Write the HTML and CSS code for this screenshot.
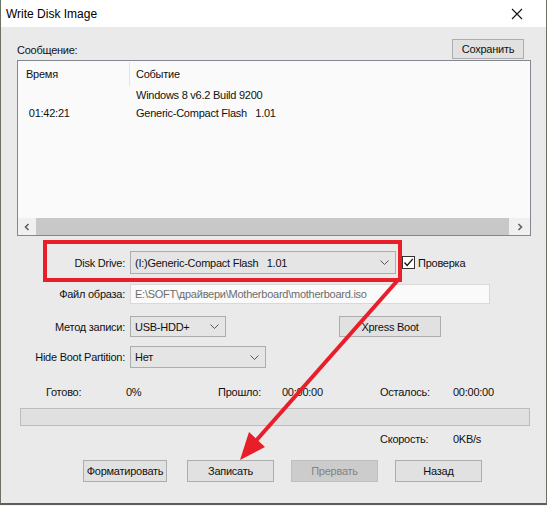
FILE: index.html
```html
<!DOCTYPE html>
<html lang="ru">
<head>
    <meta charset="UTF-8">
    <title>Write Disk Image</title>
    <link rel="stylesheet" href="styles.css">
</head>
<body>
<div class="window">
    <div class="titlebar">
        <span class="title">Write Disk Image</span>
        <svg class="close" width="12" height="12" viewBox="0 0 12 12"><path d="M1 1L11 11M11 1L1 11" stroke="#111" stroke-width="1.1" fill="none"/></svg>
    </div>
    <div class="content">
        <div class="msg-head">
            <span class="msg-label">Сообщение:</span>
            <button class="btn save">Сохранить</button>
        </div>
        <div class="log">
            <div class="log-head">
                <div class="col-time">Время</div>
                <div class="col-event">Событие</div>
            </div>
            <div class="log-row">
                <div class="col-time"></div>
                <div class="col-event">Windows 8 v6.2 Build 9200</div>
            </div>
            <div class="log-row">
                <div class="col-time">&nbsp;01:42:21</div>
                <div class="col-event">Generic-Compact Flash&nbsp;&nbsp; 1.01</div>
            </div>
            <div class="hscroll">
                <div class="arrow">
                    <svg width="8" height="8" viewBox="0 0 8 8"><path d="M5.5 1L2.5 4L5.5 7" stroke="#606060" stroke-width="1.6" fill="none"/></svg>
                </div>
                <div class="thumb"></div>
                <div class="arrow">
                    <svg width="8" height="8" viewBox="0 0 8 8"><path d="M2.5 1L5.5 4L2.5 7" stroke="#606060" stroke-width="1.6" fill="none"/></svg>
                </div>
            </div>
        </div>

        <div class="form">
            <div class="row row-drive">
                <label class="lbl">Disk Drive:</label>
                <div class="combo combo-drive">
                    <span>(I:)Generic-Compact Flash&nbsp;&nbsp; 1.01</span>
                    <svg class="chev" width="9" height="5" viewBox="0 0 9 5"><path d="M0.5 0.5L4.5 4.5L8.5 0.5" stroke="#555" fill="none"/></svg>
                </div>
                <div class="check">
                    <span class="box"><svg width="11" height="11" viewBox="0 0 11 11"><path d="M1.5 5.5L4.2 8.5L9.8 1.8" stroke="#111" stroke-width="1.3" fill="none"/></svg></span>
                    <span>Проверка</span>
                </div>
            </div>
            <div class="row row-file">
                <label class="lbl">Файл образа:</label>
                <div class="input">E:\SOFT\драйвери\Motherboard\motherboard.iso</div>
            </div>
            <div class="row row-method">
                <label class="lbl">Метод записи:</label>
                <div class="combo combo-method">
                    <span>USB-HDD+</span>
                    <svg class="chev" width="9" height="5" viewBox="0 0 9 5"><path d="M0.5 0.5L4.5 4.5L8.5 0.5" stroke="#555" fill="none"/></svg>
                </div>
                <button class="btn xpress">Xpress Boot</button>
            </div>
            <div class="row row-hide">
                <label class="lbl">Hide Boot Partition:</label>
                <div class="combo combo-hide">
                    <span>Нет</span>
                    <svg class="chev" width="9" height="5" viewBox="0 0 9 5"><path d="M0.5 0.5L4.5 4.5L8.5 0.5" stroke="#555" fill="none"/></svg>
                </div>
            </div>
        </div>

        <div class="stats">
            <span>Готово:</span>
            <span>0%</span>
            <span>Прошло:</span>
            <span>00:00:00</span>
            <span>Осталось:</span>
            <span>00:00:00</span>
        </div>
        <div class="progress"></div>
        <div class="stats speed">
            <span class="c5">Скорость:</span>
            <span class="c6">0KB/s</span>
        </div>

        <div class="actions">
            <button class="btn act act-format">Форматировать</button>
            <button class="btn act">Записать</button>
            <button class="btn act" disabled>Прервать</button>
            <button class="btn act">Назад</button>
        </div>
    </div>

    <!-- annotation layer: highlight box and arrow -->
    <svg class="marks" width="547" height="506" viewBox="0 0 547 506">
        <rect x="45" y="242" width="355" height="38" fill="none" stroke="#e81f2a" stroke-width="4"/>
        <line x1="398" y1="280" x2="254" y2="443" stroke="#e81f2a" stroke-width="4"/>
        <polygon points="240,460 265,447 249,432" fill="#e81f2a"/>
    </svg>
</div>
</body>
</html>
```

FILE: styles.css
```css
*{
    margin:0;
    padding:0;
    box-sizing:border-box;
}
body{
    background-color:#f7f7ee;
    font-family:"Liberation Sans", Arial, sans-serif;
    font-size:11px;
    letter-spacing:-0.25px;
    color:#111;
}
.window{
    position:relative;
    width:547px;
    height:505px;
    background-color:#eaeaea;
    border-left:1px solid #6b7163;
    border-right:1px solid #6b7163;
    border-bottom:2px solid #5a5f58;
    display:flex;
    flex-direction:column;
}
.titlebar{
    height:27px;
    background-color:#fff;
    display:flex;
    align-items:center;
    justify-content:space-between;
    padding:0 23px 0 5px;
}
.title{
    font-size:12px;
    letter-spacing:0;
    color:#000;
}
.content{
    padding:0 15px 0 16px;
}
.msg-head{
    display:flex;
    justify-content:space-between;
    align-items:flex-end;
    margin-top:11px;
    height:21px;
    padding-right:7px;
}
.msg-label{
    padding-bottom:3px;
}
.btn{
    font-family:inherit;
    font-size:11px;
    letter-spacing:inherit;
    color:#111;
    background-color:#e1e1e1;
    border:1px solid #adadad;
    height:20px;
}
.save{
    width:72px;
}
.log{
    margin-top:1px;
    height:176px;
    background-color:#fafafa;
    border:1px solid #828790;
    display:flex;
    flex-direction:column;
}
.log-head,
.log-row{
    display:flex;
    height:18px;
    align-items:center;
}
.log-head{
    height:26px;
    margin-bottom:-1px;
}
.col-time{
    width:112px;
    padding-left:8px;
}
.col-event{
    padding-left:6px;
}
.log-head .col-time{
    height:24px;
    line-height:24px;
    border-right:1px solid #e3e3e3;
}
.hscroll{
    margin-top:auto;
    height:17px;
    display:flex;
}
.arrow{
    width:18px;
    display:flex;
    align-items:center;
    justify-content:center;
    background-color:#f0f0f0;
}
.thumb{
    flex:1;
    background-color:#c8c8c8;
}
.hscroll .arrow:last-child{
    width:21px;
}
.form{
    margin-top:15px;
    display:flex;
    flex-direction:column;
}
.row{
    display:flex;
    align-items:center;
}
.lbl{
    width:108px;
    text-align:right;
    margin-right:5px;
}
.combo{
    height:23px;
    background-color:#e5e5e5;
    border:1px solid #acacac;
    display:flex;
    align-items:center;
    justify-content:space-between;
    padding:0 6px 0 4px;
}
.combo-drive{
    width:266px;
}
.combo-method{
    width:96px;
    height:21px;
}
.combo-hide{
    width:136px;
    height:22px;
}
.check{
    display:flex;
    align-items:center;
    margin-left:6px;
}
.box{
    width:13px;
    height:13px;
    border:1px solid #333;
    background-color:#fff;
    display:flex;
    align-items:center;
    justify-content:center;
    margin-right:3px;
}
.row-file{
    margin-top:10px;
}
.input{
    width:360px;
    height:20px;
    background-color:#fafafa;
    border:1px solid #d9d9d9;
    color:#6d6d6d;
    line-height:18px;
    padding-left:4px;
}
.row-method{
    margin-top:12px;
}
.xpress{
    width:102px;
    height:21px;
    margin-left:113px;
}
.row-hide{
    margin-top:9px;
}
.stats{
    display:grid;
    grid-template-columns:80px 92px 64px 98px 73px auto;
    padding-left:29px;
    margin-top:17px;
    height:14px;
    line-height:14px;
}
.progress{
    margin:9px 0 0 3px;
    width:510px;
    height:18px;
    background-color:#e0e0e0;
    border:1px solid #bcbcbc;
}
.speed{
    margin-top:6px;
}
.speed .c5{
    grid-column:5;
}
.speed .c6{
    grid-column:6;
}
.actions{
    display:flex;
    gap:17px;
    padding-left:66px;
    margin-top:14px;
}
.act{
    width:87px;
    height:22px;
}
.act-format{
    width:84px;
    margin-right:3px;
    padding:0;
}
.act:disabled{
    background-color:#cccccc;
    border-color:#bfbfbf;
    color:#838383;
}
.marks{
    position:absolute;
    top:0;
    left:-1px;
    pointer-events:none;
}
```
